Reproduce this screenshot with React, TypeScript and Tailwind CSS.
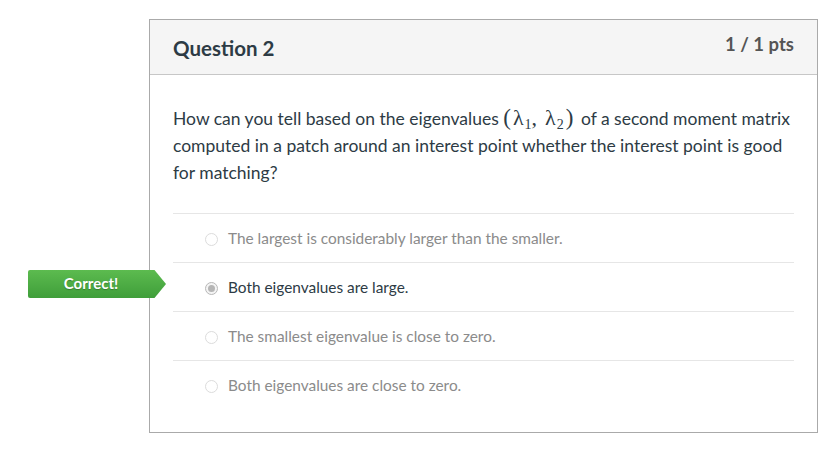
const answers = [
  { text: "The largest is considerably larger than the smaller.", picked: false },
  { text: "Both eigenvalues are large.", picked: true },
  { text: "The smallest eigenvalue is close to zero.", picked: false },
  { text: "Both eigenvalues are close to zero.", picked: false },
];

const Radio = ({ checked }: { checked: boolean }) => (
  <span
    className={`flex h-[13px] w-[13px] shrink-0 items-center justify-center rounded-full border ${
      checked ? "border-[#b8b8b8] bg-[#f4f4f4]" : "border-[#dcdcdc] bg-white"
    }`}
  >
    {checked && <span className="h-[7px] w-[7px] rounded-full bg-[#b5b5b5]" />}
  </span>
);

const CorrectBadge = () => (
  <div className="absolute left-[-145px] top-[7px] flex h-[28px] items-center">
    <div className="flex h-full w-[126px] items-center justify-center rounded-l-[2px] bg-gradient-to-b from-[#5cbb4f] to-[#3f9e3a] pb-[2px] text-[15px] font-bold text-white [text-shadow:0_1px_1px_rgba(0,0,0,0.25)]">
      Correct!
    </div>
    <svg width="12" height="28" viewBox="0 0 12 28" className="block">
      <defs>
        <linearGradient id="g" x1="0" y1="0" x2="0" y2="1">
          <stop offset="0" stopColor="#5cbb4f" />
          <stop offset="1" stopColor="#3f9e3a" />
        </linearGradient>
      </defs>
      <path d="M0 0 L0.5 0 L12 14 L0.5 28 L0 28 Z" fill="url(#g)" />
    </svg>
  </div>
);

const Lambda = ({ i }: { i: number }) => (
  <span className="inline-flex items-baseline">
    <span className="text-[22px]">λ</span>
    <span className="relative top-[4px] ml-[1px] text-[14px]">{i}</span>
  </span>
);

export default function App() {
  return (
    <div className="min-h-[449px] bg-white pl-[149px] pt-[19px] font-['Lato','Open_Sans',sans-serif]">
      <div className="w-[669px] border border-[#aaaaaa] bg-white">
        <div className="flex h-[55px] justify-between border-b border-[#c7c7c7] bg-[#f5f5f5] px-[23px]">
          <h2 className="self-center pt-[2px] text-[20.5px] font-bold text-[#2d3b45]">Question 2</h2>
          <span className="mt-[11px] text-[18.5px] font-bold text-[#555]">1 / 1 pts</span>
        </div>

        <div className="px-[23px] pb-[23px] pt-[30px]">
          <p className="text-[17.5px] leading-[27px] text-[#2d3b45]">
            How can you tell based on the eigenvalues{" "}
            <span className="mr-[3px] inline-flex items-baseline font-['Liberation_Serif',serif] leading-none">
              <span className="mr-[2px] text-[23px]">(</span>
              <Lambda i={1} />
              <span className="mr-[8px] text-[22px]">,</span>
              <Lambda i={2} />
              <span className="ml-[2px] text-[23px]">)</span>
            </span>{" "}
            of a second moment matrix computed in a patch around an interest point whether the interest
            point is good for matching?
          </p>

          <div className="mt-[27px]">
            {answers.map((a) => (
              <div
                key={a.text}
                className="relative flex h-[49px] items-center gap-[10px] border-t border-[#e6e6e6] pl-[32px] pt-[2px]"
              >
                {a.picked && <CorrectBadge />}
                <Radio checked={a.picked} />
                <span className={`text-[15.4px] ${a.picked ? "text-[#2d3b45]" : "text-[#8b8b8b]"}`}>
                  {a.text}
                </span>
              </div>
            ))}
          </div>
        </div>
      </div>
    </div>
  );
}
